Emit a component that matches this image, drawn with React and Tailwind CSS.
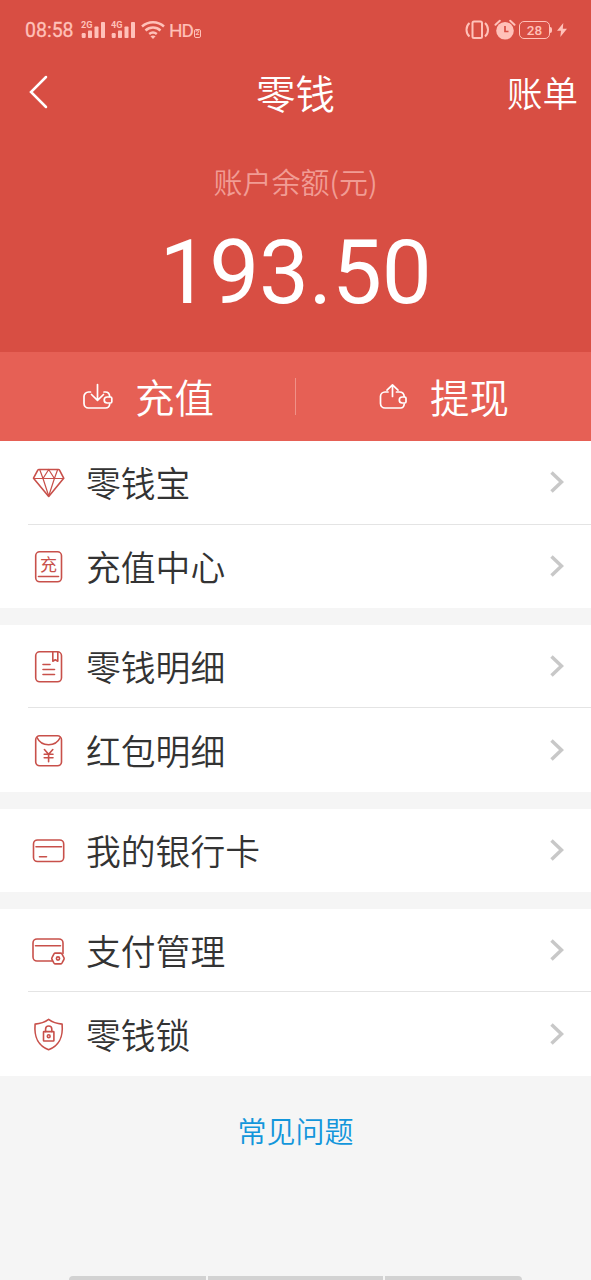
const iconProps = {
  viewBox: "0 0 36 36",
  fill: "none",
  stroke: "currentColor",
  strokeWidth: 1.6,
  strokeLinecap: "round",
  strokeLinejoin: "round",
  className: "w-9 h-9 mt-[1.500px] shrink-0 text-[#c8504a]",
};

function DiamondIcon() {
  return (
    <svg {...iconProps}>
      <path d="M9 4.500h19.500q.7 0 1 .6l4.200 8.100L18.700 31.500 3.500 13.200l4.300-8.100q.4-.6 1.200-.6z" />
      <path d="M3.500 13.500h30.200M9.800 4.700l3.200 8.800 5.700 17.500 5.700-17.500 3.200-8.800M13 13.500l5.700-9 5.700 9" strokeWidth="1.200" />
    </svg>
  );
}

function TopUpIcon() {
  return (
    <svg {...iconProps}>
      <rect x="5.7" y="2.800" width="25.800" height="30" rx="4" />
      <path d="M8.500 27.500h20" />
      <text x="18.600" y="22.300" fontSize="17" fontWeight="400" textAnchor="middle" fill="currentColor" stroke="none">充</text>
    </svg>
  );
}

function DetailIcon() {
  return (
    <svg {...iconProps}>
      <rect x="5.7" y="2.800" width="25.800" height="30" rx="4" />
      <path d="M22.800 3.200v9l2.500-1.500 2.500 1.500v-9M13 15.500h7M13 20.500h11.500M13 25.500h11.500" />
    </svg>
  );
}

function RedPacketIcon() {
  return (
    <svg {...iconProps}>
      <rect x="5.7" y="2.800" width="25.800" height="30" rx="4" />
      <path d="M7 4.500c2.200 4.800 6.400 7.200 11.600 7.200S28 9.300 30.200 4.500M14.400 16.500l4.200 4.800 4.200-4.800M18.600 21.300v7.500M14.200 21.300h8.800M14.200 24.800h8.800" />
    </svg>
  );
}

function CardIcon() {
  return (
    <svg {...iconProps}>
      <rect x="3.500" y="7" width="30.200" height="21.500" rx="4" />
      <path d="M6 13.800h25.500M9.500 23.800h7" />
    </svg>
  );
}

function PayIcon() {
  return (
    <svg {...iconProps}>
      <path d="M22 28H7a4 4 0 0 1-4-4V10a4 4 0 0 1 4-4h22a4 4 0 0 1 4 4v10.500M5.500 12.800h25" />
      <path d="m25.300 20 5.200.1q1 0 1.400.8l2 3.700q.5 1 0 1.900l-2 3.600q-.5.8-1.400.8h-5q-1 0-1.500-.8l-2-3.600q-.5-1 0-1.900l2-3.700q.5-.9 1.300-.9z" />
      <circle cx="28" cy="25.500" r="1.600" />
    </svg>
  );
}

function LockIcon() {
  return (
    <svg {...iconProps}>
      <path d="M18.600 2.300c4 2.900 8.200 4.300 13.500 4.800 1 11.700-1.500 21-13.500 25.700C6.600 28.100 4.100 18.800 5.100 7.100c5.300-.5 9.500-1.900 13.500-4.800z" />
      <rect x="13.500" y="14.600" width="10.400" height="9.400" rx=".5" />
      <path d="M15.600 14.600v-2.500a3 3 0 0 1 6.200 0v2.500" />
      <circle cx="18.700" cy="19.200" r="1.400" />
    </svg>
  );
}

function WalletIcon({ out }) {
  return (
    <svg viewBox="0 0 32 30" fill="none" stroke="currentColor" strokeWidth="1.7" strokeLinecap="round" strokeLinejoin="round" className="w-8 h-[30px] shrink-0">
      <path d={out
        ? "M10 10H7a4.500 4.500 0 0 0-4.500 4.500v7A4.500 4.500 0 0 0 7 26h15.500c2.300 0 3.500-1.300 3.700-4M18.500 10H21.500c3 0 4.500 1.600 4.700 4.500"
        : "M8.500 10H6.500A4.500 4.500 0 0 0 2 14.500v7A4.500 4.500 0 0 0 6.500 26h17c2.300 0 4-1.500 4.200-4M22 10h1.500c2.500 0 4 1.600 4.200 4.500"}
      />
      <path d={out
        ? "M26.800 15h-2.500a3 3 0 0 0 0 6h2.500q1.200 0 1.200-1.300v-3.400q0-1.300-1.200-1.300z"
        : "M28.500 15h-3.300a3 3 0 0 0 0 6h3.300q1.300 0 1.300-1.300v-3.400q0-1.300-1.300-1.300z"}
      />
      <path d={out ? "M14.500 14.500V3M9 8.200 14.500 2.800 20 8.200" : "M15.500 2.500V18M9.500 12.500l6 5.800 6-5.800"} />
    </svg>
  );
}

function Signal({ label }) {
  return (
    <svg viewBox="0 0 25 20" fill="currentColor" className="w-[25px] h-5">
      <text x="0" y="8" fontSize="9" fontWeight="700" textLength="11.500" lengthAdjust="spacingAndGlyphs">{label}</text>
      <rect x=".7" y="13" width="4" height="5" rx="1.200" />
      <rect x="7" y="10.500" width="4" height="7.500" rx=".8" />
      <rect x="13.500" y="6.500" width="4" height="11.500" rx=".8" />
      <rect x="20" y="2" width="4" height="16" rx=".8" />
    </svg>
  );
}

function StatusBar() {
  return (
    <div className="h-[60px] pl-[25px] pr-[23px] flex items-center justify-between text-[#ffc1b9] font-[Roboto] font-normal">
      <div className="flex items-center h-5">
        <span className="w-[56px] mt-[2px] text-[19.5px] leading-5 [-webkit-text-stroke:0.3px]">08:58</span>
        <Signal label="2G" />
        <span className="w-[5px]" />
        <Signal label="4G" />
        <svg viewBox="0 0 24 20" fill="none" stroke="currentColor" strokeWidth="2.500" className="w-6 h-5 ml-[5px]">
          <path d="M1 6.500c6.300-5.700 15.700-5.700 22 0M4.500 10.500c4.300-3.900 10.700-3.900 15 0M8.200 14c2.300-1.800 5.300-1.800 7.600 0" />
          <path d="m12 19-2.600-2.700q2.600-1.800 5.200 0z" fill="currentColor" stroke="none" />
        </svg>
        <span className="ml-1 mt-[2px] text-[19px] leading-5 tracking-[-1px] [-webkit-text-stroke:0.2px]">HD</span>
        <span className="ml-[1px] mt-1.5 w-[7px] h-[9px] border border-current rounded-[2px] text-[7px] leading-[7px] text-center font-bold">2</span>
      </div>
      <div className="flex items-center h-5">
        <svg viewBox="0 0 25 20" fill="none" stroke="currentColor" strokeWidth="2" className="w-[25px] h-5">
          <rect x="7.500" y="1.500" width="9.500" height="16.500" rx="1.500" />
          <path d="M4.500 3c-4 3.500-4 10 0 13.500M20 3c4 3.500 4 10 0 13.500" />
        </svg>
        <svg viewBox="0 0 20 20" className="w-5 h-5 ml-[5px] mr-[1px] overflow-visible">
          <circle cx="10" cy="10.700" r="8.800" fill="currentColor" />
          <path d="M.5 4.800 4.800.8M19.500 4.800 15.200.8" stroke="currentColor" strokeWidth="2" strokeLinecap="round" />
          <path d="M10 6v5.500h3.500" fill="none" stroke="#d84e43" strokeWidth="1.700" />
        </svg>
        <span className="ml-[3px] w-[31px] h-[18px] border-[1.500px] border-current rounded-[5px] text-[13.500px] leading-4 text-center font-medium">28</span>
        <span className="w-[2px] h-1.5 bg-current rounded-r" />
        <svg viewBox="0 0 10 14" fill="currentColor" className="w-[10px] h-[14px] ml-[5px] mr-[1px]">
          <path d="M6.300 0 0 7.800h4L3.300 14 10 5.700H5.800z" />
        </svg>
      </div>
    </div>
  );
}

const groups = [
  [
    { label: "零钱宝", Icon: DiamondIcon },
    { label: "充值中心", Icon: TopUpIcon },
  ],
  [
    { label: "零钱明细", Icon: DetailIcon },
    { label: "红包明细", Icon: RedPacketIcon },
  ],
  [{ label: "我的银行卡", Icon: CardIcon }],
  [
    { label: "支付管理", Icon: PayIcon },
    { label: "零钱锁", Icon: LockIcon },
  ],
];

function Row({ label, Icon, divided }) {
  return (
    <div className="bg-white pl-7">
      <div className={`h-[83.600px] flex items-center pl-[2px] pr-[27px] ${divided ? "border-b border-[#e4e4e4]" : ""}`}>
        <Icon />
        <span className="ml-5 flex-1 text-[34.800px] leading-[50px] text-[#333]">{label}</span>
        <svg viewBox="0 0 14 24" fill="none" stroke="#c8c8c8" strokeWidth="3.500" className="w-[14px] h-6">
          <path d="m1.500 2.500 10 9.500-10 9.500" />
        </svg>
      </div>
    </div>
  );
}

export default function App() {
  return (
    <div className="h-screen overflow-hidden flex flex-col bg-[#f5f5f5] font-['Noto_Sans_CJK_SC',sans-serif] font-[350]">
      <header className="h-[352px] shrink-0 bg-[#d84e43] text-white">
        <StatusBar />
        <nav className="h-16 grid grid-cols-3 items-center pl-7 pr-[13px]">
          <svg viewBox="0 0 22 36" fill="none" stroke="currentColor" strokeWidth="2.500" strokeLinecap="round" className="w-[22px] h-9">
            <path d="M18 3 3 18l15 15" />
          </svg>
          <h1 className="-mt-px text-[39.500px] leading-[56px] text-center -ml-[15px]">零钱</h1>
          <span className="text-[35.500px] leading-[52px] text-right">账单</span>
        </nav>
        <p className="mt-[36px] text-center text-[29px] leading-[42px] text-[#f19c94]">账户余额(元)</p>
        <p className="mt-[21px] text-center text-[89px] leading-[100px] font-[Roboto] font-normal tracking-[-0.3px]">193.50</p>
      </header>

      <div className="h-[89px] shrink-0 flex items-center bg-[#e66055] text-white">
        <button className="flex-1 flex items-center pl-[82px]">
          <WalletIcon />
          <span className="ml-[21px] -mt-px text-[39.500px] leading-[56px]">充值</span>
        </button>
        <span className="w-px h-[37px] bg-[#f09188]" />
        <button className="flex-1 flex items-center pl-[82px]">
          <WalletIcon out />
          <span className="ml-[20px] -mt-px text-[39.500px] leading-[56px]">提现</span>
        </button>
      </div>

      <main className="flex flex-col gap-[16.600px]">
        {groups.map((rows, i) => (
          <section key={i}>
            {rows.map((row, j) => (
              <Row key={row.label} {...row} divided={j < rows.length - 1} />
            ))}
          </section>
        ))}
      </main>

      <a className="mt-[33px] text-center text-[29px] leading-[42px] text-[#1296db]">常见问题</a>

      {/* system navigation hints */}
      <div className="mt-auto h-1 flex gap-0.5 justify-center">
        <span className="w-[137px] bg-[#d2d2d2] rounded-tl" />
        <span className="w-[175px] bg-[#d2d2d2]" />
        <span className="w-[137px] bg-[#d2d2d2] rounded-tr" />
      </div>
    </div>
  );
}
